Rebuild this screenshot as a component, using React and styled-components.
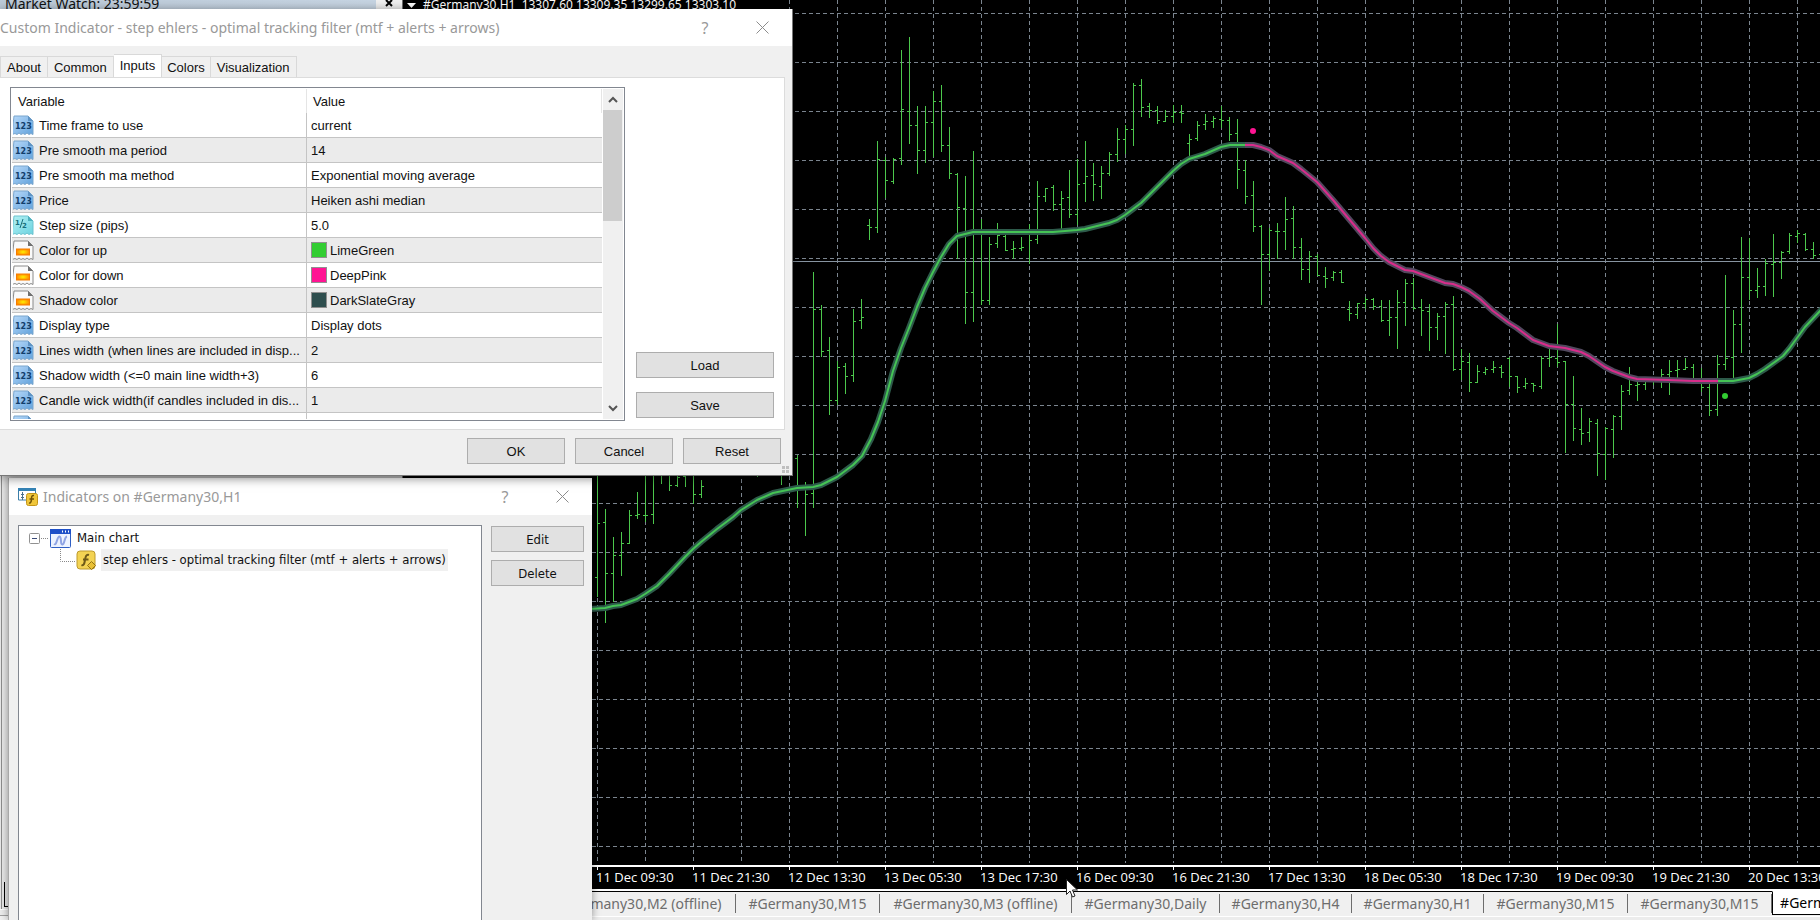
import React from 'react';
import styled, { createGlobalStyle, css } from 'styled-components';

const GlobalStyle = createGlobalStyle`
  * {
    box-sizing: border-box;
  }

  body {
    margin: 0;
    overflow: hidden;
    background: #f0f0f0;
    font-family: 'Liberation Sans', Arial, sans-serif;
    font-size: 13px;
    color: #111;
  }

  button {
    font: inherit;
    color: inherit;
  }
`;

const uiFont = `'Noto Sans', 'Open Sans', sans-serif`;

/* ---------- data ---------- */

// [high, low, open, close], one bar every 8px, null is a missing tick
const BARS = [
  [440, 597, 577, 523],
  [509, 623, 522, 573],
  [537, 602, 573, 555],
  [532, 576, 555, 543],
  [510, 544, 543, 515],
  [492, 519, 515, 514],
  [460, 522, 515, 515],
  [460, 524, 514, null],
  [450, 484, null, null],
  [450, 491, null, 485],
  [450, 487, 485, 477],
  [450, 487, 476, null],
  [450, 504, null, 494],
  [480, 498, 494, 486],
  [450, 476, null, null],
  [440, 470, null, null],
  [440, 470, null, null],
  [440, 470, null, null],
  [440, 470, null, null],
  [440, 470, null, null],
  [440, 477, null, null],
  [440, 470, null, null],
  [440, 470, null, null],
  [440, 485, null, null],
  [440, 470, null, null],
  [455, 508, 458, 488],
  [482, 536, 488, 494],
  [272, 508, 493, 309],
  [305, 357, 309, 351],
  [337, 415, 350, 400],
  [361, 405, 400, 367],
  [363, 394, 366, 376],
  [309, 382, 375, 321],
  [299, 329, 320, 317],
  [219, 240, 225, 227],
  [141, 233, 227, 159],
  [157, 198, 160, 180],
  [158, 184, 181, 159],
  [50, 165, 158, 109],
  [37, 144, 111, 125],
  [106, 174, 125, 150],
  [106, 163, 150, 122],
  [91, 157, 122, 101],
  [85, 152, 101, 145],
  [127, 179, 145, 173],
  [173, 259, 174, 207],
  [176, 324, 208, 292],
  [151, 322, 292, null],
  [219, 305, null, 300],
  [237, 305, 300, 244],
  [223, 248, 243, 235],
  [235, 251, 236, 250],
  [241, 259, 249, 248],
  [237, 251, 248, 247],
  [224, 264, null, 240],
  [181, 244, 239, 196],
  [188, 202, 196, 188],
  [185, 211, 187, 204],
  [191, 229, 204, 198],
  [170, 218, 197, 214],
  [159, 225, 214, 184],
  [141, 202, 183, 176],
  [163, 201, 175, 184],
  [166, 199, 186, 173],
  [152, 176, 173, 154],
  [128, 162, 154, 139],
  [125, 154, 139, 129],
  [83, 146, 129, 85],
  [79, 117, 85, 107],
  [103, 118, 106, 110],
  [106, 124, 110, 120],
  [110, 122, 121, 116],
  [105, 123, 116, 112],
  [105, 123, 112, 113],
  [134, 156, 143, 139],
  [121, 141, 138, 125],
  [114, 130, 124, 121],
  [116, 128, 121, 118],
  [106, 128, 119, 120],
  [117, 141, 120, 134],
  [119, 189, 133, 169],
  [160, 204, 170, 196],
  [181, 232, 195, 226],
  [225, 305, 226, 254],
  [228, 271, 254, 230],
  [223, 259, 231, 231],
  [197, 250, 231, 219],
  [206, 259, 218, 247],
  [238, 280, 247, 269],
  [251, 283, 269, 256],
  [254, 276, 256, 275],
  [267, 288, 276, 278],
  [271, 281, 277, 272],
  [270, 283, 272, 282],
  [301, 321, 309, 313],
  [303, 319, 314, 303],
  [297, 309, 303, 299],
  [298, 310, 299, 306],
  [300, 322, 306, 320],
  [300, 336, 320, 317],
  [290, 349, 317, 302],
  [279, 326, 302, 283],
  [278, 310, 283, 308],
  [299, 336, 307, 310],
  [304, 351, 311, 327],
  [313, 340, 327, 316],
  [302, 354, 316, 304],
  [296, 371, 304, 369],
  [349, 380, 369, 361],
  [353, 392, 362, 382],
  [365, 383, 382, 371],
  [367, 375, 372, 369],
  [361, 373, 369, 367],
  [365, 378, 367, 372],
  [357, 387, 358, 376],
  [376, 393, 376, 387],
  [378, 389, 386, 383],
  [383, 392, 383, 385],
  [356, 389, 386, 358],
  [348, 367, 358, 357],
  [324, 367, 358, 362],
  [361, 453, 361, 404],
  [376, 441, 404, 428],
  [408, 445, 429, 433],
  [418, 442, 432, 421],
  [419, 476, 423, 453],
  [427, 480, 454, 428],
  [415, 458, 429, 416],
  [385, 430, 416, 391],
  [367, 395, 390, 384],
  [380, 401, 385, 384],
  [380, 390, 384, null],
  [378, 385, null, null],
  [369, 388, null, 374],
  [360, 395, 374, 371],
  [360, 380, 370, 369],
  [358, 370, 369, 367],
  [364, 380, 367, null],
  [368, 392, null, 387],
  [382, 416, 387, 410],
  [355, 416, 409, 364],
  [275, 370, 364, 358],
  [310, 378, 357, 324],
  [237, 353, 324, 277],
  [238, 300, 277, 290],
  [268, 298, 290, 286],
  [259, 296, 286, 263],
  [234, 297, 264, 262],
  [251, 279, 262, 252],
  [233, 254, 251, 235],
  [230, 243, 236, 233],
  [233, 251, 234, 249],
  [242, 259, 249, 255],
  [244, 260, 254, null],
];

const LINE_START =
  '590,609 605,608 613,606 621,605 637,599 645,594 657,586 669,574 685,557 693,549 701,542 717,529 733,517 741,510 757,500 773,493 797,488 813,487 821,485 837,477 853,465 862,456 871,439 878,422 885,401 893,371 901,348 909,328 917,307 925,288 933,272 941,257 949,244 957,236 973,232 1053,232 1077,230 1085,229 1101,225 1109,223 1117,220 1125,215 1133,209 1141,203 1157,187 1173,171 1181,164 1189,159 1205,154 1221,147 1230,145 1245,145';
const LINE_DOWN =
  '1245,145 1253,145 1261,147 1269,150 1277,156 1293,163 1301,169 1317,182 1333,200 1349,219 1365,238 1373,248 1381,256 1389,262 1405,270 1413,271 1429,277 1445,283 1453,284 1461,287 1469,291 1480,299 1493,311 1509,323 1517,328 1533,340 1541,343 1549,346 1565,348 1581,352 1589,356 1605,367 1613,371 1629,377 1637,379 1669,380 1693,381 1718,381';
const LINE_END =
  '1718,381 1733,381 1749,378 1757,374 1765,369 1783,356 1789,349 1805,327 1821,310 1840,290';

const TIMES = [
  '11 Dec 09:30',
  '11 Dec 21:30',
  '12 Dec 13:30',
  '13 Dec 05:30',
  '13 Dec 17:30',
  '16 Dec 09:30',
  '16 Dec 21:30',
  '17 Dec 13:30',
  '18 Dec 05:30',
  '18 Dec 17:30',
  '19 Dec 09:30',
  '19 Dec 21:30',
  '20 Dec 13:30',
];

const CHART_TABS = [
  { label: '#Germany30,M2 (offline)', width: 192 },
  { label: '#Germany30,M15', width: 144 },
  { label: '#Germany30,M3 (offline)', width: 192 },
  { label: '#Germany30,Daily', width: 148 },
  { label: '#Germany30,H4', width: 132 },
  { label: '#Germany30,H1', width: 132 },
  { label: '#Germany30,M15', width: 144 },
  { label: '#Germany30,M15', width: 144 },
  { label: '#Germany30,H1', width: 124, active: true },
];

const INPUTS = [
  { type: 'int', name: 'Time frame to use', value: 'current' },
  { type: 'int', name: 'Pre smooth ma period', value: '14' },
  { type: 'int', name: 'Pre smooth ma method', value: 'Exponential moving average' },
  { type: 'int', name: 'Price', value: 'Heiken ashi median' },
  { type: 'double', name: 'Step size (pips)', value: '5.0' },
  { type: 'color', name: 'Color for up', value: 'LimeGreen', color: 'limegreen' },
  { type: 'color', name: 'Color for down', value: 'DeepPink', color: 'deeppink' },
  { type: 'color', name: 'Shadow color', value: 'DarkSlateGray', color: 'darkslategray' },
  { type: 'int', name: 'Display type', value: 'Display dots' },
  { type: 'int', name: 'Lines width (when lines are included in disp...', value: '2' },
  { type: 'int', name: 'Shadow width (<=0 main line width+3)', value: '6' },
  { type: 'int', name: 'Candle wick width(if candles included in dis...', value: '1' },
  { type: 'int', name: '', value: '' },
];

/* ---------- terminal ---------- */

const Terminal = styled.div`
  position: relative;
  display: grid;
  grid-template-columns: 402px 1fr;
  height: 100vh;
  overflow: hidden;
`;

const Workspace = styled.main`
  display: flex;
  flex-direction: column;
  min-width: 0;
  min-height: 0;
`;

const MarketWatch = styled.aside`
  display: flex;
  flex-direction: column;
  min-height: 0;
  background: #e8e8e8;

  header {
    display: flex;
    justify-content: space-between;
    height: 24px;
    background: linear-gradient(90deg, #bccad8, #c8d6e4);
    font-family: ${uiFont};
    font-size: 14px;
    line-height: 7px;
  }

  h2 {
    margin: 0;
    padding-left: 5px;
    font: inherit;
  }

  button {
    display: flex;
    justify-content: center;
    width: 26px;
    padding: 0;
    border: 0;
    background: #f0f0f0;
  }

  .list {
    flex: 1;
    display: flex;
    align-items: flex-end;
    margin-left: 1px;
    padding-bottom: 2px;
    border-left: 1px solid #8c8c8c;
  }

  .list-tab {
    width: 20px;
    height: 25px;
    margin-left: 2px;
    border: solid #000;
    border-width: 0 0 1px 1px;
  }

  .status {
    height: 11px;
    border-top: 1px solid #fff;
    background: linear-gradient(#ececec 5px, #a0a0a0 5px 6px, #f0f0f0 6px);
  }
`;

const ChartWindow = styled.section`
  flex: 1;
  display: flex;
  flex-direction: column;
  min-width: 0;
  min-height: 0;
  overflow: hidden;
  background: #000;
  color: #fff;
  border-left: 1px solid #6c6c6c;
  border-bottom: 2px solid #fff;
  font-family: ${uiFont};
`;

const ChartTitle = styled.header`
  display: flex;
  align-items: center;
  gap: 7px;
  height: 10px;
  padding-left: 4px;
  font-size: 12px;
  line-height: 10px;
  white-space: pre;
`;

const Plot = styled.svg`
  flex: 1;
  width: 100%;
  min-height: 0;
  display: block;
  overflow: visible;
`;

const TimeAxis = styled.div`
  display: flex;
  height: 24px;
  padding-left: 193px;
  border-top: 2px solid #fff;
  font-family: 'Open Sans', 'Noto Sans', sans-serif;

  span {
    flex: 0 0 96px;
    font-size: 13px;
    line-height: 20px;
    white-space: nowrap;
  }

  span::before {
    content: '';
    display: block;
    width: 1px;
    height: 3px;
    margin: 0 0 -3px 1px;
    background: #fff;
  }
`;

const ChartTabs = styled.nav`
  display: flex;
  align-items: flex-start;
  height: 29px;
  padding-left: 142px;
  overflow: hidden;
  background: linear-gradient(#000 1px, #f0f0f0 1px 25px, #fff 25px 26px, #ececec 26px);
  font-family: ${uiFont};
  font-size: 14px;
`;

const ChartTab = styled.button`
  flex: 0 0 ${({ $width }) => $width}px;
  height: 19px;
  margin-top: 3px;
  padding: 0;
  border: 0;
  border-right: 1px solid #6d6d6d;
  background: none;
  line-height: 18px;
  color: #6d6d6d;
  white-space: nowrap;

  ${({ $active }) =>
    $active &&
    css`
      height: 24px;
      margin-top: 0;
      background: #fff;
      border: 1px solid #000;
      border-top-color: #fff;
      line-height: 22px;
      color: #000;
    `}
`;

const Cursor = styled.svg`
  position: absolute;
  left: 1066px;
  top: 879px;
  z-index: 5;
`;

/* ---------- dialogs ---------- */

const Dialog = styled.section`
  position: absolute;
  display: flex;
  flex-direction: column;
  background: #f0f0f0;
`;

const InputsDialog = styled(Dialog)`
  left: 0;
  top: 9px;
  z-index: 3;
  width: 793px;
  height: 467px;
  border-right: 1px solid #777;
  border-bottom: 1px solid #777;
  box-shadow: 0 2px 10px rgba(0, 0, 0, 0.5);
`;

const IndicatorsDialog = styled(Dialog)`
  left: 8px;
  top: 478px;
  bottom: 0;
  z-index: 2;
  width: 584px;
  border-left: 1px solid #a8a8a8;
  box-shadow: 0 0 8px rgba(0, 0, 0, 0.4);
`;

const TitleBar = styled.header`
  display: flex;
  align-items: center;
  height: 37px;
  padding-left: ${({ $inset }) => $inset}px;
  padding-right: 14px;
  background: #fff;
  font-family: ${uiFont};
  font-size: 14px;
  color: #999;

  h1 {
    flex: 1;
    margin: 0;
    font: inherit;
    white-space: nowrap;
  }

  > svg {
    margin-right: 5px;
  }
`;

const TitleButton = styled.button`
  display: flex;
  align-items: center;
  justify-content: center;
  width: 32px;
  height: 32px;
  margin-left: ${({ $gap }) => $gap || 0}px;
  padding: 0;
  border: 0;
  background: none;
  font-size: 16px;
`;

const PushButton = styled.button`
  height: 26px;
  width: ${({ $width }) => ($width ? `${$width}px` : '100%')};
  padding: 0;
  border: 1px solid #adadad;
  background: #e1e1e1;
`;

const TabList = styled.div`
  display: flex;
  align-items: flex-end;
  height: 32px;
`;

const Tab = styled.button`
  height: 22px;
  padding: 0 ${({ $pad }) => $pad}px;
  border: 1px solid #d9d9d9;
  border-left-width: ${({ $first }) => ($first ? 1 : 0)}px;
  background: #f0f0f0;

  ${({ $active }) =>
    $active &&
    css`
      height: 24px;
      padding-bottom: 2px;
      border-bottom-color: #fff;
      background: #fff;
    `}
`;

const TabPanel = styled.div`
  display: grid;
  grid-template-columns: 1fr 138px;
  gap: 11px;
  height: 353px;
  margin-top: -1px;
  margin-right: 7px;
  padding: 9px 10px 8px;
  background: #fff;
  border: 1px solid #dcdcdc;
  border-left: 0;
`;

const ListFrame = styled.div`
  display: flex;
  height: 334px;
  padding: 1px;
  overflow: hidden;
  border: 1px solid #828790;
`;

const ListBody = styled.div`
  flex: 1;
  overflow: hidden;
`;

const InputsTable = styled.table`
  width: 100%;
  border-collapse: separate;
  border-spacing: 0;
  table-layout: fixed;

  th {
    height: 24px;
    padding: 0 6px;
    border-right: 1px solid #e5e5e5;
    font-weight: normal;
    text-align: left;
  }

  th:first-child {
    width: 295px;
  }

  td {
    height: 25px;
    padding: 0 0 0 4px;
    border-bottom: 1px solid #c4c4c4;
    white-space: nowrap;
  }

  td:first-child {
    padding-left: 1px;
    border-right: 1px solid #c4c4c4;
  }

  tr:nth-child(even) td {
    background: #ebebeb;
  }

  .cell {
    display: flex;
    align-items: center;
    gap: 5px;
  }
`;

const Swatch = styled.span`
  width: 16px;
  height: 16px;
  margin-right: -2px;
  border: 1px solid #909090;
  background: ${({ $color }) => $color};
`;

const ScrollBar = styled.div`
  display: flex;
  flex-direction: column;
  width: 21px;
  border-left: 1px solid #fff;
  background: #f0f0f0;

  button {
    display: flex;
    align-items: center;
    justify-content: center;
    height: 21px;
    padding: 0;
    border: 0;
    background: none;
  }

  .track {
    flex: 1;
  }

  .thumb {
    width: 19px;
    height: 111px;
    background: #cdcdcd;
  }
`;

const SideButtons = styled.div`
  display: flex;
  flex-direction: column;
  justify-content: flex-end;
  gap: 14px;
  padding-bottom: 3px;
`;

const Footer = styled.footer`
  display: flex;
  justify-content: flex-end;
  gap: 10px;
  padding: 8px 11px 0;
`;

const Grip = styled.svg`
  position: absolute;
  right: 3px;
  bottom: 2px;
`;

const IndicatorsBody = styled.div`
  flex: 1;
  display: grid;
  grid-template-columns: 1fr 93px;
  gap: 9px;
  padding: 10px 8px 0 9px;
  font-family: 'DejaVu Sans Condensed', 'Noto Sans', sans-serif;
`;

const Tree = styled.ul`
  margin: 0;
  padding: 1px 0 0 10px;
  list-style: none;
  background: #fff;
  border: 1px solid #828790;
  border-bottom: 0;
`;

const TreeRow = styled.li`
  display: flex;
  align-items: center;
  height: 22px;
  padding-left: ${({ $indent }) => $indent || 0}px;

  span {
    margin-left: 4px;
    padding: 0 2px;
    line-height: 22px;
    white-space: nowrap;
    background: ${({ $selected }) => ($selected ? '#f0f0f0' : 'none')};
  }
`;

const ButtonStack = styled.div`
  display: flex;
  flex-direction: column;
  gap: 8px;
  padding-top: 1px;
`;

/* ---------- icons ---------- */

function CloseIcon() {
  return (
    <svg width="13" height="13" viewBox="0 0 13 13">
      <path d="M.5.5l12 12M12.5.5l-12 12" stroke="#8c8c8c" fill="none" />
    </svg>
  );
}

function PageIcon({ type }) {
  const look = {
    int: { fill: 'url(#blue)', edge: '#7ba6cd', fold: '#5f93c4' },
    double: { fill: 'url(#cyan)', edge: '#6cc3cf', fold: '#4fb0be' },
    color: { fill: '#fafafa', edge: '#8a8a8a', fold: '#707070' },
  }[type];
  return (
    <svg width="21" height="21" viewBox="0 0 21 21" aria-hidden="true">
      <defs>
        <linearGradient id="blue" x1="0" y1="0" x2="1" y2="1">
          <stop offset="0" stopColor="#b9dafa" />
          <stop offset="1" stopColor="#62a2dc" />
        </linearGradient>
        <linearGradient id="cyan" x1="0" y1="0" x2="1" y2="1">
          <stop offset="0" stopColor="#b4f1f4" />
          <stop offset="1" stopColor="#6cd3e0" />
        </linearGradient>
        <radialGradient id="sun">
          <stop offset="0" stopColor="#fff200" />
          <stop offset="1" stopColor="#ff8a00" />
        </radialGradient>
      </defs>
      <path
        d="M1 1h14l5 5v13.500l-2-1-2 1-2-1.500-2 1.500-2-1-2 1-2-1.500-2 1.500-2-1-3 1z"
        fill={look.fill}
        stroke={look.edge}
      />
      <path d="M15 1v5h5z" fill={look.fold} />
      {type === 'int' && (
        <text x="2" y="14" fontFamily="DejaVu Sans" fontWeight="bold" fontSize="8" fill="#123e6b">
          123
        </text>
      )}
      {type === 'double' && (
        <g fontFamily="DejaVu Sans" fontWeight="bold" fontSize="7" fill="#176f7d">
          <text x="2" y="10">1</text>
          <text x="9" y="13">2</text>
          <path d="M10 4L7 13" stroke="#176f7d" />
        </g>
      )}
      {type === 'color' && <rect x="3.500" y="9" width="13" height="6" fill="url(#sun)" stroke="#f57c00" />}
    </svg>
  );
}

function IndicatorsIcon() {
  return (
    <svg width="20" height="18" viewBox="0 0 20 18" aria-hidden="true">
      <path d="M.5 1h17v11H.5z" fill="#fff" stroke="#3c7ea8" />
      <path d="M0 0h18v3H0z" fill="#3583b5" />
      <path d="M4.500 4v8M3 6.500h3M3 9.500h3" stroke="#4b6f8a" fill="none" />
      <rect x="8.500" y="5.500" width="11" height="12" rx="2" fill="#f0c63a" stroke="#c39518" />
      <path d="M16 7.500c-2-.5-2.500 1-2.500 3s-.5 5-2.500 4.500M11.500 11h4.500" stroke="#6f5207" strokeWidth="1.500" fill="none" />
    </svg>
  );
}

function MainChartIcon() {
  return (
    <svg width="21" height="19" viewBox="0 0 21 19" aria-hidden="true">
      <rect x=".5" y=".5" width="20" height="18" rx="1" fill="#edf3ff" stroke="#2f5fc4" />
      <path d="M0 0h21v5H0z" fill="#1e50c8" />
      <path d="M12 2.500h1M15 2.500h1M18 2.500h1" stroke="#fff" strokeWidth="2" />
      <path d="M4 15c3 2 3-8 5.500-7.500S10 16 12.500 15.500 14 8 17 7.500" stroke="#8fa4e4" strokeWidth="2" fill="none" />
    </svg>
  );
}

function FunctionIcon() {
  return (
    <svg width="21" height="21" viewBox="0 0 21 21" aria-hidden="true">
      <rect x="1" y="1" width="18" height="18" rx="3" fill="#f3d353" stroke="#bd9a2c" />
      <path d="M13 5c-3-1-3.500 2-4 5s-1 6-3.500 5M7 9.500h5.500" stroke="#6e5a18" strokeWidth="2" fill="none" />
      <path d="M15.500 11.500l4 4-4 4-4-4z" fill="#e9c034" stroke="#947313" />
    </svg>
  );
}

function Plotted({ points, color, shadow }) {
  return (
    <g fill="none" strokeLinejoin="round">
      <polyline points={points} stroke={shadow} strokeWidth="6" />
      <polyline points={points} stroke={color} strokeWidth="2" />
    </g>
  );
}

function PriceChart() {
  const columns = Array.from({ length: 60 }, (_, i) => 405 + i * 48);
  const rows = Array.from({ length: 18 }, (_, i) => 13 + i * 49);
  const bars = BARS.map(([high, low, open, close], i) => {
    const x = 597 + i * 8;
    return (
      `M${x}.5 ${high}V${low}` +
      (open === null ? '' : `M${x - 2} ${open}.5h2`) +
      (close === null ? '' : `M${x + 1} ${close}.5h2`)
    );
  }).join('');

  return (
    <Plot role="img" aria-label="Germany30 hourly price bars with tracking filter">
      <g transform="translate(-403 -10)">
        <g stroke="#7b858f" strokeDasharray="4 3" shapeRendering="crispEdges">
          {columns.map((x) => (
            <path key={x} d={`M${x}.5 ${x < 780 ? 10 : 0}V863`} />
          ))}
          {rows.map((y) => (
            <path key={y} d={`M403 ${y}.5H4000`} />
          ))}
        </g>
        <path d="M403 261.500H4000" stroke="#8794a1" shapeRendering="crispEdges" />
        <path d={bars} stroke="#4cc84c" fill="none" shapeRendering="crispEdges" />
        <Plotted points={LINE_START} color="#45c455" shadow="#2d5a4a" />
        <Plotted points={LINE_END} color="#45c455" shadow="#2d5a4a" />
        <Plotted points={LINE_DOWN} color="#d92c8b" shadow="#51485e" />
        <circle cx="1253" cy="131" r="3" fill="#ff1493" />
        <circle cx="1725" cy="396" r="3" fill="#32cd32" />
      </g>
    </Plot>
  );
}

function CustomIndicatorDialog() {
  return (
    <InputsDialog role="dialog" aria-label="Custom Indicator">
      <TitleBar $inset={0}>
        <h1>Custom Indicator - step ehlers - optimal tracking filter (mtf + alerts + arrows)</h1>
        <TitleButton aria-label="Help">?</TitleButton>
        <TitleButton aria-label="Close" $gap={25}>
          <CloseIcon />
        </TitleButton>
      </TitleBar>
      <TabList role="tablist">
        <Tab role="tab" $pad={6} $first>About</Tab>
        <Tab role="tab" $pad={6}>Common</Tab>
        <Tab role="tab" $pad={6} $active aria-selected="true">Inputs</Tab>
        <Tab role="tab" $pad={5}>Colors</Tab>
        <Tab role="tab" $pad={6}>Visualization</Tab>
      </TabList>
      <TabPanel role="tabpanel">
        <ListFrame>
          <ListBody>
            <InputsTable>
              <thead>
                <tr>
                  <th scope="col">Variable</th>
                  <th scope="col">Value</th>
                </tr>
              </thead>
              <tbody>
                {INPUTS.map((input, i) => (
                  <tr key={i}>
                    <td>
                      <div className="cell">
                        <PageIcon type={input.type} />
                        {input.name}
                      </div>
                    </td>
                    <td>
                      <div className="cell">
                        {input.color && <Swatch $color={input.color} />}
                        {input.value}
                      </div>
                    </td>
                  </tr>
                ))}
              </tbody>
            </InputsTable>
          </ListBody>
          <ScrollBar>
            <button aria-label="Scroll up">
              <svg width="10" height="7" viewBox="0 0 10 7">
                <path d="M1 6l4-4 4 4" stroke="#555" strokeWidth="2" fill="none" />
              </svg>
            </button>
            <div className="track">
              <div className="thumb" />
            </div>
            <button aria-label="Scroll down">
              <svg width="10" height="7" viewBox="0 0 10 7">
                <path d="M1 1l4 4 4-4" stroke="#555" strokeWidth="2" fill="none" />
              </svg>
            </button>
          </ScrollBar>
        </ListFrame>
        <SideButtons>
          <PushButton>Load</PushButton>
          <PushButton>Save</PushButton>
        </SideButtons>
      </TabPanel>
      <Footer>
        <PushButton $width={98}>OK</PushButton>
        <PushButton $width={98}>Cancel</PushButton>
        <PushButton $width={98}>Reset</PushButton>
      </Footer>
      <Grip width="7" height="7" aria-hidden="true">
        <path d="M0 0h3v3H0zM4 0h3v3H4zM0 4h3v3H0zM4 4h3v3H4z" fill="#bfbfbf" />
      </Grip>
    </InputsDialog>
  );
}

function IndicatorListDialog() {
  return (
    <IndicatorsDialog role="dialog" aria-label="Indicators">
      <TitleBar $inset={9}>
        <IndicatorsIcon />
        <h1>Indicators on #Germany30,H1</h1>
        <TitleButton aria-label="Help">?</TitleButton>
        <TitleButton aria-label="Close" $gap={25}>
          <CloseIcon />
        </TitleButton>
      </TitleBar>
      <IndicatorsBody>
        <Tree>
          <TreeRow>
            <svg width="21" height="22" aria-hidden="true">
              <rect x=".5" y="6.500" width="10" height="10" rx="1" fill="#fff" stroke="#919191" />
              <path d="M3 11.500h5" stroke="#3a4a78" />
              <path d="M12 11.500h8" stroke="#888" strokeDasharray="1 1" />
            </svg>
            <MainChartIcon />
            <span>Main chart</span>
          </TreeRow>
          <TreeRow $indent={31} $selected>
            <svg width="16" height="22" aria-hidden="true">
              <path d="M.5 0v12.500H15" stroke="#888" strokeDasharray="1 1" fill="none" />
            </svg>
            <FunctionIcon />
            <span>step ehlers - optimal tracking filter (mtf + alerts + arrows)</span>
          </TreeRow>
        </Tree>
        <ButtonStack>
          <PushButton>Edit</PushButton>
          <PushButton>Delete</PushButton>
        </ButtonStack>
      </IndicatorsBody>
    </IndicatorsDialog>
  );
}

export default function App() {
  return (
    <>
      <GlobalStyle />
      <Terminal>
        <MarketWatch>
          <header>
            <h2>Market Watch: 23:59:59</h2>
            <button aria-label="Close Market Watch">
              <svg width="8" height="7" viewBox="0 0 8 7">
                <path d="M1 0l6 6M7 0L1 6" stroke="#000" strokeWidth="2" />
              </svg>
            </button>
          </header>
          <div className="list">
            <div className="list-tab" />
          </div>
          <div className="status" />
        </MarketWatch>
        <Workspace>
          <ChartWindow>
            <ChartTitle>
              <svg width="9" height="5">
                <path d="M0 0h9L4.500 5z" fill="#fff" />
              </svg>
              {'#Germany30,H1  13307.60 13309.35 13299.65 13303.10'}
            </ChartTitle>
            <PriceChart />
            <TimeAxis>
              {TIMES.map((time) => (
                <span key={time}>{time}</span>
              ))}
            </TimeAxis>
          </ChartWindow>
          <ChartTabs>
            {CHART_TABS.map((tab, i) => (
              <ChartTab key={i} $width={tab.width} $active={tab.active}>
                {tab.label}
              </ChartTab>
            ))}
          </ChartTabs>
        </Workspace>
        <CustomIndicatorDialog />
        <IndicatorListDialog />
        <Cursor width="13" height="19" viewBox="0 0 13 19" aria-hidden="true">
          <path d="M.5.5v15l3.500-3.500 2.500 6 2.500-1-2.500-6h5z" fill="#fff" stroke="#222" />
        </Cursor>
      </Terminal>
    </>
  );
}
